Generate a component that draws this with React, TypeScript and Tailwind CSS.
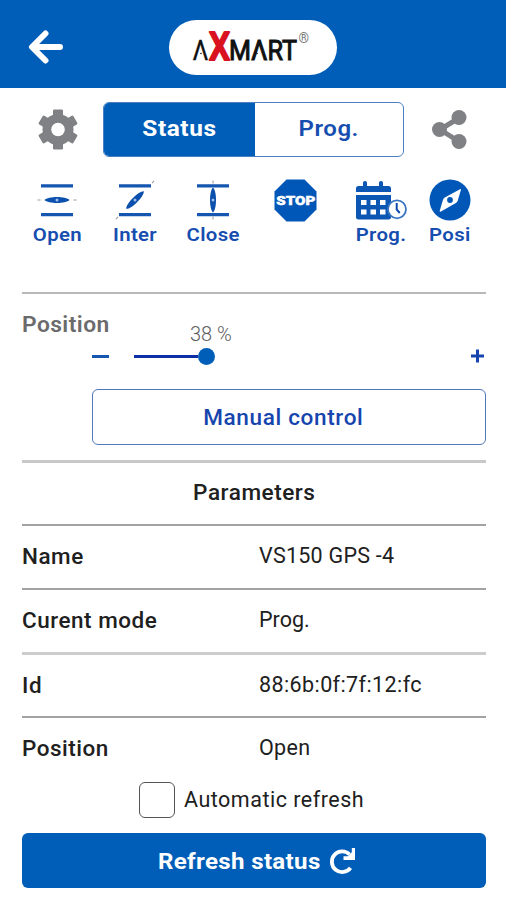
import React from 'react';

const PARAMETERS = [
  { label: 'Name', value: 'VS150 GPS -4', line: 'h-0.5 bg-[#a3a3a3]', tracking: 'tracking-[0.25px]' },
  { label: 'Curent mode', value: 'Prog.', line: 'h-0.5 bg-[#a3a3a3]', tracking: 'tracking-[0px]' },
  { label: 'Id', value: '88:6b:0f:7f:12:fc', line: 'h-[3px] bg-[#cccccc]', tracking: 'tracking-[0.4px]' },
  { label: 'Position', value: 'Open', line: 'h-0.5 bg-[#a3a3a3]', tracking: 'tracking-[0.3px]' },
];

function Logo() {
  return (
    <svg width="168" height="55" viewBox="0 0 168 55" fontFamily="Roboto, sans-serif">
      <text x="23.5" y="40" fontSize="27" fill="#111" stroke="#111" strokeWidth="0.3" textLength="16" lengthAdjust="spacingAndGlyphs">Λ</text>
      <text x="60" y="40" fontSize="27" fill="#111" stroke="#111" strokeWidth="1" textLength="68" lengthAdjust="spacingAndGlyphs">MΛRT</text>
      <text x="40" y="39.5" fontSize="39" fontWeight="500" fill="#d8131f" stroke="#d8131f" strokeWidth="2.2" strokeLinejoin="round" textLength="21" lengthAdjust="spacingAndGlyphs">X</text>
      <circle cx="32" cy="33.5" r="0.8" fill="#111" />
      <circle cx="88" cy="33.5" r="0.8" fill="#111" />
      <text x="129.5" y="23" fontSize="14" fill="#777" textLength="10.5" lengthAdjust="spacingAndGlyphs">®</text>
    </svg>
  );
}

function BackArrow() {
  return (
    <svg width="36" height="36" viewBox="0 0 36 36" fill="none" stroke="#fff" strokeWidth="6" strokeLinecap="round" strokeLinejoin="round">
      <path d="M17.5 4.5 4 18 17.5 31.5M4.5 18h27.5" />
    </svg>
  );
}

function Gear() {
  return (
    <svg width="40" height="42" viewBox="0 0 40 42">
      <g fill="#7f8184">
        <circle cx="20" cy="20.5" r="15.5" />
        <rect x="15" y="0.5" width="10" height="40" rx="1.2" />
        <rect x="15" y="0.5" width="10" height="40" rx="1.2" transform="rotate(60 20 20.5)" />
        <rect x="15" y="0.5" width="10" height="40" rx="1.2" transform="rotate(120 20 20.5)" />
      </g>
      <circle cx="20" cy="20.5" r="6.8" fill="#fff" />
    </svg>
  );
}

function Share() {
  return (
    <svg width="36" height="40" viewBox="0 0 36 40" fill="#7f8184">
      <path d="M27 8 8 19.5l19 12" fill="none" stroke="#7f8184" strokeWidth="5" />
      <circle cx="7.5" cy="19.5" r="7.5" />
      <circle cx="27" cy="7.5" r="7.5" />
      <circle cx="27" cy="31.5" r="7.5" />
    </svg>
  );
}

function Damper({ angle }: { angle: number }) {
  const axis = angle === -45 ? 27 : 19.5;
  return (
    <svg width="42" height="44" viewBox="0 0 42 44" overflow="visible">
      <path d="M5 6.8h32M5 35.6h32" stroke="#1456b0" strokeWidth="3.2" />
      <g transform={`rotate(${angle} 21 21)`}>
        <path d={`M${21 - axis} 21h3M${18 + axis} 21h3`} stroke="#999" strokeWidth="1" />
        <path d="M8.5 21C12 17 30 17 33.5 21 30 25 12 25 8.5 21Z" fill="#0b50ad" />
        <circle cx="21" cy="21" r="1.5" fill="#9fbde4" />
      </g>
    </svg>
  );
}

function Stop() {
  return (
    <svg width="43" height="43" viewBox="0 0 43 43">
      <path d="M12.5.5h18l12 12v18l-12 12h-18l-12-12v-18Z" fill="#0057b8" />
      <text x="2.3" y="26.2" fontFamily="Roboto, sans-serif" fontSize="13.5" fontWeight="900" fill="#fff" stroke="#fff" strokeWidth="0.5" textLength="39" lengthAdjust="spacingAndGlyphs">STOP</text>
    </svg>
  );
}

function Calendar() {
  return (
    <svg width="51" height="40" viewBox="0 0 51 40">
      <g fill="#0b57b3">
        <path d="M0 11V7.5Q0 5 2.5 5H7V1.5Q7 0 9 0t2 1.5V5h12V1.5Q23 0 25 0t2 1.5V5h5.5Q35 5 35 7.5V11Z" />
        <path d="M0 14h35V36q0 2.500-2.500 2.500h-30Q0 38.500 0 36Z" />
      </g>
      <g fill="#fff">
        <rect x="5" y="19" width="5.500" height="5" />
        <rect x="14.500" y="19" width="5.500" height="5" />
        <rect x="24" y="19" width="5.500" height="5" />
        <rect x="5" y="28.500" width="5.500" height="5" />
        <rect x="14.500" y="28.500" width="5.500" height="5" />
        <rect x="24" y="28.500" width="5.500" height="5" />
      </g>
      <circle cx="41" cy="28.300" r="9" fill="#fff" stroke="#3975c2" strokeWidth="1.800" />
      <path d="M40.700 22v6.500l3 3.500" fill="none" stroke="#0b4aab" strokeWidth="2" />
    </svg>
  );
}

function Compass() {
  return (
    <svg width="42" height="42" viewBox="0 0 42 42">
      <circle cx="21" cy="21" r="20.5" fill="#0057b8" />
      <path d="M31 10.200q1.200-.5.900.8l-3.200 10.800q-.5 1.500-1.800 2.300L12 32.500q-1.700.8-1.200-1l3.200-10.700q.5-1.600 1.800-2.400Z" fill="#fff" />
      <circle cx="21" cy="21" r="2.900" fill="#0057b8" />
    </svg>
  );
}

function Refresh() {
  return (
    <svg width="28" height="28" viewBox="0 0 28 28">
      <path d="M20.500 7.500A10.300 10.300 0 1 0 21.500 20.800" fill="none" stroke="#fff" strokeWidth="3.800" />
      <path d="M22.800 1h3.200v12H14.500V9.300h4.300l4-4Z" fill="#fff" />
    </svg>
  );
}

function Action({ icon, label, className }: { icon: React.ReactNode; label?: string; className: string }) {
  return (
    <button className={`flex shrink-0 flex-col items-center ${className}`}>
      <span className="flex h-[44px] items-start justify-center">{icon}</span>
      <span className="h-6 scale-x-[1.1] text-[18.5px] leading-6 font-semibold tracking-[0.3px] whitespace-nowrap text-[#164eb0]">{label}</span>
    </button>
  );
}

export default function App() {
  return (
    <div className="flex h-[900px] w-[506px] flex-col overflow-hidden bg-white font-['Roboto',sans-serif] text-[#202020]">
      <header className="flex h-[88px] shrink-0 items-center bg-[#005eb8]">
        <button className="ml-7 w-9 pt-1.5">
          <BackArrow />
        </button>
        <div className="mt-1.5 ml-[105px] flex h-[55px] w-[168px] rounded-full bg-white">
          <Logo />
        </div>
      </header>

      {/* Mode switch */}
      <div className="mt-3.5 flex h-[55px] shrink-0 items-center pl-[38px]">
        <Gear />
        <div className="ml-[25px] flex h-[55px] w-[301px] overflow-hidden rounded-md border-[1.5px] border-[#4b7fc3]">
          <button className="w-[151px] bg-[#005eb8] pb-0.5 text-[22px] font-bold tracking-[0.5px] text-white">
            <span className="inline-block scale-x-[1.11]">Status</span>
          </button>
          <button className="flex-1 pb-0.5 text-[22px] font-semibold tracking-[0.5px] text-[#164eb0]">
            <span className="inline-block scale-x-[1.09]">Prog.</span>
          </button>
        </div>
        <span className="ml-[28px]">
          <Share />
        </span>
      </div>

      {/* Valve actions */}
      <div className="mt-[22px] flex h-[72px] shrink-0 pl-[22px]">
        <Action icon={<Damper angle={0} />} label="Open" className="w-[70px]" />
        <Action icon={<Damper angle={-45} />} label="Inter" className="ml-[8px] w-[70px]" />
        <Action icon={<Damper angle={90} />} label="Close" className="ml-[8px] w-[70px]" />
        <Action icon={<Stop />} className="ml-[26px] w-[43px]" />
        <Action icon={<span className="mt-0.5"><Calendar /></span>} label="Prog." className="ml-[39px] w-[51px]" />
        <Action icon={<Compass />} label="Posi" className="ml-[22px] w-[42px]" />
      </div>

      <main className="flex flex-col pr-[20px] pl-[22px]">
        <div className="mt-[41px] h-[2px] bg-[#b8b8b8]" />

        {/* Position slider */}
        <section className="flex h-[95px] flex-col">
          <div className="flex">
            <h2 className="mt-[19px] w-[168px] text-[21.5px] leading-6 font-semibold tracking-[0.4px] text-[#6b6b6b]">
              <span className="inline-block origin-left scale-x-[1.06]">Position</span>
            </h2>
            <span className="mt-7 text-[20px] leading-6 font-light text-[#606060]">38 %</span>
          </div>
          <div className="mt-[1px] flex h-[18px] items-center pl-[70px]">
            <span className="h-[3px] w-[17px] bg-[#1456b0]" />
            <span className="ml-[25px] h-[3px] w-[64px] bg-[#0c2fa6]" />
            <span className="size-[17px] rounded-full bg-[#005eb8]" />
            <svg className="mr-[2px] ml-auto" width="14" height="14" viewBox="0 0 14 14">
              <path d="M1 7h13M7.5.5v13" stroke="#1745ae" strokeWidth="3" />
            </svg>
          </div>
        </section>
        <button className="ml-[70px] h-[56px] rounded-md border-[1.5px] border-[#5078bb] pt-0.5 pr-3 text-[21.5px] font-medium tracking-[0.6px] text-[#1745ae]">
          <span className="inline-block scale-x-[1.05]">Manual control</span>
        </button>
        <div className="mt-[15px] h-[3px] bg-[#c8c8c8]" />

        {/* Parameters */}
        <h2 className="h-[61px] pt-[18px] text-center text-[21.5px] leading-6 font-medium tracking-[0.5px]">
          <span className="inline-block scale-x-[1.05]">Parameters</span>
        </h2>
        {PARAMETERS.map(({ label, value, line, tracking }) => (
          <div key={label} className="h-16">
            <div className={line} />
            <div className="flex h-[60px] items-center">
              <span className="w-[237px] pt-0.5 text-[21.5px] font-medium tracking-[0.5px]">
                <span className="inline-block origin-left scale-x-[1.045]">{label}</span>
              </span>
              <span className={`text-[21.5px] ${tracking}`}>{value}</span>
            </div>
          </div>
        ))}
        <label className="mt-[2px] flex h-9 items-center pl-[117px]">
          <span className="size-9 rounded-md border-[1.5px] border-[#555]" />
          <span className="ml-[9px] text-[21.5px] tracking-[0.5px]">Automatic refresh</span>
        </label>
        <button className="mt-[15px] flex h-[55px] items-center rounded-md bg-[#005eb8] pl-[136px] text-[21.5px] font-bold tracking-[0.3px] text-white">
          <span className="mt-1 w-[171px] text-left">
            <span className="inline-block origin-left scale-x-[1.12] whitespace-nowrap">Refresh status</span>
          </span>
          <Refresh />
        </button>
      </main>
    </div>
  );
}
